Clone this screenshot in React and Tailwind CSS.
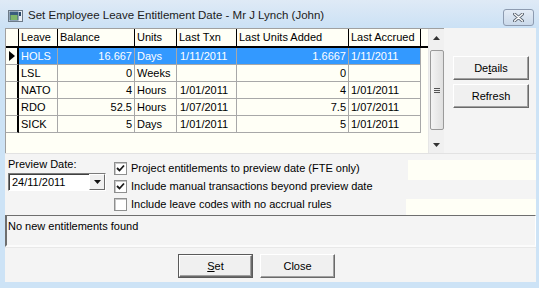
import React from "react";

const rows = [
  { leave: "HOLS", bal: "16.667", units: "Days", txn: "1/11/2011", added: "1.6667", acc: "1/11/2011", sel: true },
  { leave: "LSL", bal: "0", units: "Weeks", txn: "", added: "0", acc: "" },
  { leave: "NATO", bal: "4", units: "Hours", txn: "1/01/2011", added: "4", acc: "1/01/2011" },
  { leave: "RDO", bal: "52.5", units: "Hours", txn: "1/07/2011", added: "7.5", acc: "1/07/2011" },
  { leave: "SICK", bal: "5", units: "Days", txn: "1/01/2011", added: "5", acc: "1/01/2011" },
];

function Btn({ children, def, className = "" }) {
  return (
    <div className={"w-[75px] h-[24px] " + (def ? "border border-[#5a5a5a] " : "") + className}>
      <div className="w-full h-full border border-t-white border-l-white border-r-[#6a6a6a] border-b-[#6a6a6a] bg-[#f0f0f0] flex items-center justify-center text-[11px] text-black shadow-[inset_-1px_-1px_0_#a0a0a0]">
        {children}
      </div>
    </div>
  );
}

function Check({ checked }) {
  return (
    <div className="w-[13px] h-[13px] border border-[#8e8f8f] bg-white flex items-center justify-center shadow-[inset_1px_1px_0_#c8c8c8]">
      {checked && (
        <svg width="9" height="9" viewBox="0 0 9 9">
          <path d="M1 4 L3.5 6.5 L8 1.5" stroke="#1a1a1a" strokeWidth="1.8" fill="none" />
        </svg>
      )}
    </div>
  );
}

export default function App() {
  const cols = "grid grid-cols-[13px_39px_77px_42px_60px_112px_72px]";
  return (
    <div className="w-[539px] h-[288px] bg-[#cde3f6] flex flex-col font-['Liberation_Sans',Arial,sans-serif] text-[11px] text-black overflow-hidden">
      {/* Title bar */}
      <div className="h-[28px] flex items-start pl-[8px] pr-[5px] bg-gradient-to-b from-[#dfeaf6] to-[#cbe1f5]">
        <svg width="15" height="12" viewBox="0 0 15 12" className="mt-[10px]">
          <rect x="0.5" y="0.5" width="14" height="11" fill="#e8eef4" stroke="#6c7a88" />
          <rect x="1.5" y="1.5" width="9" height="9" fill="#3a5d7e" />
          <rect x="2.5" y="5" width="7" height="5" fill="#7fb56a" />
          <rect x="11" y="2" width="2" height="4" fill="#2a4a6a" />
        </svg>
        <span className="ml-[5px] mt-[8px] text-[11.5px] text-[#1c1c1c] leading-[15px]">
          Set Employee Leave Entitlement Date - Mr J Lynch (John)
        </span>
        <div className="ml-auto mt-[9px] w-[31px] h-[17px] rounded-[3px] border border-[#8d9bb0] bg-gradient-to-b from-[#e4ecf6] to-[#cad9ea] flex items-center justify-center">
          <svg width="11" height="9" viewBox="0 0 11 9">
            <path d="M1.5 1 L9.5 8 M9.5 1 L1.5 8" stroke="#59636f" strokeWidth="3" strokeLinecap="round" />
            <path d="M1.5 1 L9.5 8 M9.5 1 L1.5 8" stroke="#ffffff" strokeWidth="1.3" strokeLinecap="round" />
          </svg>
        </div>
      </div>

      {/* Client */}
      <div className="ml-[5px] mr-[3px] h-[254px] bg-[#f4f4f4] flex flex-col">
        {/* Top section */}
        <div className="h-[125px] flex">
          <div className="w-[439px] h-full bg-[#fffff6] border-t border-l border-[#a0a0a0] flex">
            <div className="w-[423px] flex flex-col">
              {/* header */}
              <div className={cols + " h-[19px] border-b-2 border-black bg-[#fffff6]"}>
                <div className="border-r border-black" />
                {["Leave", "Balance", "Units", "Last Txn", "Last Units Added", "Last Accrued"].map((h) => (
                  <div key={h} className="border-r border-black pl-[2px] flex items-center leading-none whitespace-nowrap overflow-hidden">
                    {h}
                  </div>
                ))}
              </div>
              {rows.map((r) => {
                const cell = "h-[17px] border-r border-b border-[#a8a8a8] flex items-center leading-none whitespace-nowrap overflow-hidden " + (r.sel ? "bg-[#3399ff] text-white" : "");
                return (
                  <div key={r.leave} className={cols}>
                    <div className="h-[17px] border-r-2 border-r-black border-b border-b-[#a8a8a8] flex items-center justify-center">
                      {r.sel && (
                        <svg width="6" height="10" viewBox="0 0 6 10">
                          <path d="M0 0 L6 5 L0 10 Z" fill="#000" />
                        </svg>
                      )}
                    </div>
                    <div className={cell + " pl-[2px]"}>{r.leave}</div>
                    <div className={cell + " justify-end pr-[2px]"}>{r.bal}</div>
                    <div className={cell + " pl-[2px]"}>{r.units}</div>
                    <div className={cell + " pl-[3px]"}>{r.txn}</div>
                    <div className={cell + " justify-end pr-[2px]"}>{r.added}</div>
                    <div className={cell + " pl-[2px]"}>{r.acc}</div>
                  </div>
                );
              })}
            </div>
            {/* Scrollbar */}
            <div className="w-[16px] h-full bg-[#f0f0f0] flex flex-col items-center border-l border-[#e6e6e6]">
              <div className="h-[17px] w-full flex items-center justify-center">
                <svg width="7" height="4" viewBox="0 0 7 4"><path d="M0 4 L3.5 0 L7 4 Z" fill="#333" /></svg>
              </div>
              <div className="mt-[4px] h-[80px] w-[14px] rounded-[2px] border border-[#9a9a9a] bg-gradient-to-r from-[#f4f4f4] to-[#e0e0e0] flex items-center justify-center">
                <div className="flex flex-col gap-[1px]">
                  <div className="w-[6px] h-[1px] bg-[#555]" />
                  <div className="w-[6px] h-[1px] bg-[#555]" />
                  <div className="w-[6px] h-[1px] bg-[#555]" />
                </div>
              </div>
              <div className="mt-auto h-[17px] w-full flex items-center justify-center">
                <svg width="7" height="4" viewBox="0 0 7 4"><path d="M0 0 L3.5 4 L7 0 Z" fill="#333" /></svg>
              </div>
            </div>
          </div>
          <div className="flex-1 flex flex-col pl-[9px] pt-[28px] gap-[4px]">
            <Btn className="w-[76px]">
              De<span className="underline">t</span>ails
            </Btn>
            <Btn className="w-[76px]">Refresh</Btn>
          </div>
        </div>

        {/* Middle section */}
        <div className="h-[62px] flex border-t border-[#e2e2e2]">
          <div className="w-[109px] pl-[3px] pt-[4px] flex flex-col">
            <span className="leading-[13px] text-[11px]">Preview Date:</span>
            <div className="mt-[2px] w-[98px] h-[18px] border border-t-[#7a7a7a] border-l-[#7a7a7a] border-r-white border-b-white bg-white flex shadow-[inset_1px_1px_0_#404040]">
              <span className="pl-[3px] pt-[1px] leading-[15px] flex-1">24/11/2011</span>
              <div className="w-[16px] h-[16px] border border-t-white border-l-white border-r-[#6a6a6a] border-b-[#6a6a6a] bg-[#f0f0f0] flex items-center justify-center">
                <svg width="7" height="4" viewBox="0 0 7 4"><path d="M0 0 L3.5 4 L7 0 Z" fill="#111" /></svg>
              </div>
            </div>
          </div>
          <div className="flex-1 flex flex-col pt-[5px]">
            <div className="h-[18px] flex items-center">
              <Check checked />
              <span className="ml-[4px] leading-none">Project entitlements to preview date (FTE only)</span>
              <div className="ml-auto w-[128px] h-[20px] mt-[4px] bg-[#fffff6]" />
            </div>
            <div className="h-[18px] flex items-center">
              <Check checked />
              <span className="ml-[4px] leading-none">Include manual transactions beyond preview date</span>
            </div>
            <div className="h-[18px] flex items-center">
              <Check />
              <span className="ml-[4px] leading-none">Include leave codes with no accrual rules</span>
              <div className="ml-auto w-[130px] h-[16px] mt-[6px] bg-[#fffff6]" />
            </div>
          </div>
        </div>

        {/* Status box */}
        <div className="h-[32px] border-t border-l-2 border-t-[#6e6e6e] border-l-[#6e6e6e] border-b-2 border-b-[#fbfbfb] border-r border-r-white bg-[#f4f4f4] pl-[1px] pt-[4px] leading-[13px]">
          No new entitlements found
        </div>

        {/* Bottom buttons */}
        <div className="flex-1 flex pl-[173px] pt-[6px] gap-[7px] border-t border-[#e8e8e8]">
          <Btn def className="w-[74px]">
            <span className="underline">S</span>et
          </Btn>
          <Btn className="w-[74px]">Close</Btn>
        </div>
      </div>
    </div>
  );
}
